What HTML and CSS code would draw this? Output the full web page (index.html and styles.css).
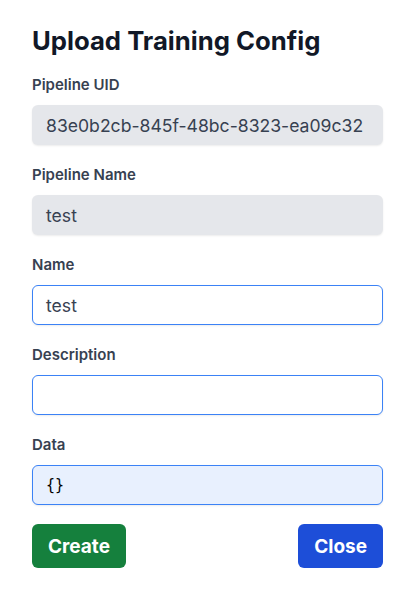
FILE: index.html
```html
<!DOCTYPE html>
<html>
<head>
<meta charset="utf-8">
<link rel="stylesheet" href="styles.css">
</head>
<body>
<div class="modal">
  <h1 class="title">Upload Training Config</h1>
  <div class="field">
    <label class="label">Pipeline UID</label>
    <div class="input input-disabled">83e0b2cb-845f-48bc-8323-ea09c32</div>
  </div>
  <div class="field">
    <label class="label">Pipeline Name</label>
    <div class="input input-disabled">test</div>
  </div>
  <div class="field">
    <label class="label">Name</label>
    <div class="input input-active">test</div>
  </div>
  <div class="field">
    <label class="label">Description</label>
    <div class="input input-active"></div>
  </div>
  <div class="field">
    <label class="label">Data</label>
    <div class="input input-active input-data"><span class="mono">{}</span></div>
  </div>
  <div class="actions">
    <button class="btn btn-create">Create</button>
    <button class="btn btn-close">Close</button>
  </div>
</div>
</body>
</html>
```
FILE: styles.css
```css
* { box-sizing: border-box; }
body {
  margin: 0;
  background: #ffffff;
  font-family: Inter, "Noto Sans", sans-serif;
}
.modal {
  padding: 25px 34px 0 32px;
  width: 417px;
}
.title {
  margin: 0 0 18px 0;
  font-size: 25.7px;
  line-height: 32px;
  font-weight: 700;
  color: #111827;
}
.field {
  display: flex;
  flex-direction: column;
  margin-bottom: 20px;
}
.label {
  font-size: 15px;
  line-height: 20px;
  font-weight: 600;
  color: #374151;
  margin-bottom: 10px;
}
.input {
  height: 40px;
  border-radius: 6px;
  border: 1px solid transparent;
  padding: 0 13px;
  display: flex;
  align-items: center;
  font-size: 17.6px;
  color: #374151;
  white-space: nowrap;
  overflow: hidden;
  box-shadow: 0 1px 2px rgba(0,0,0,0.08);
}
.input-disabled {
  background: #e5e7eb;
  color: #374151;
}
.input-active {
  background: #ffffff;
  border-color: #3b82f6;
}
.input-data {
  background: #e8f0fe;
}
.mono {
  font-family: "DejaVu Sans Mono", monospace;
  font-size: 15px;
  color: #000;
}
.actions {
  display: flex;
  justify-content: space-between;
  margin-top: -1px;
}
.btn {
  border: none;
  border-radius: 6px;
  height: 44px;
  padding: 0 16px;
  font-family: Inter, sans-serif;
  font-size: 19px;
  font-weight: 700;
  color: #ffffff;
}
.btn-create { background: #15803d; }
.btn-close { background: #1d4ed8; }
```
